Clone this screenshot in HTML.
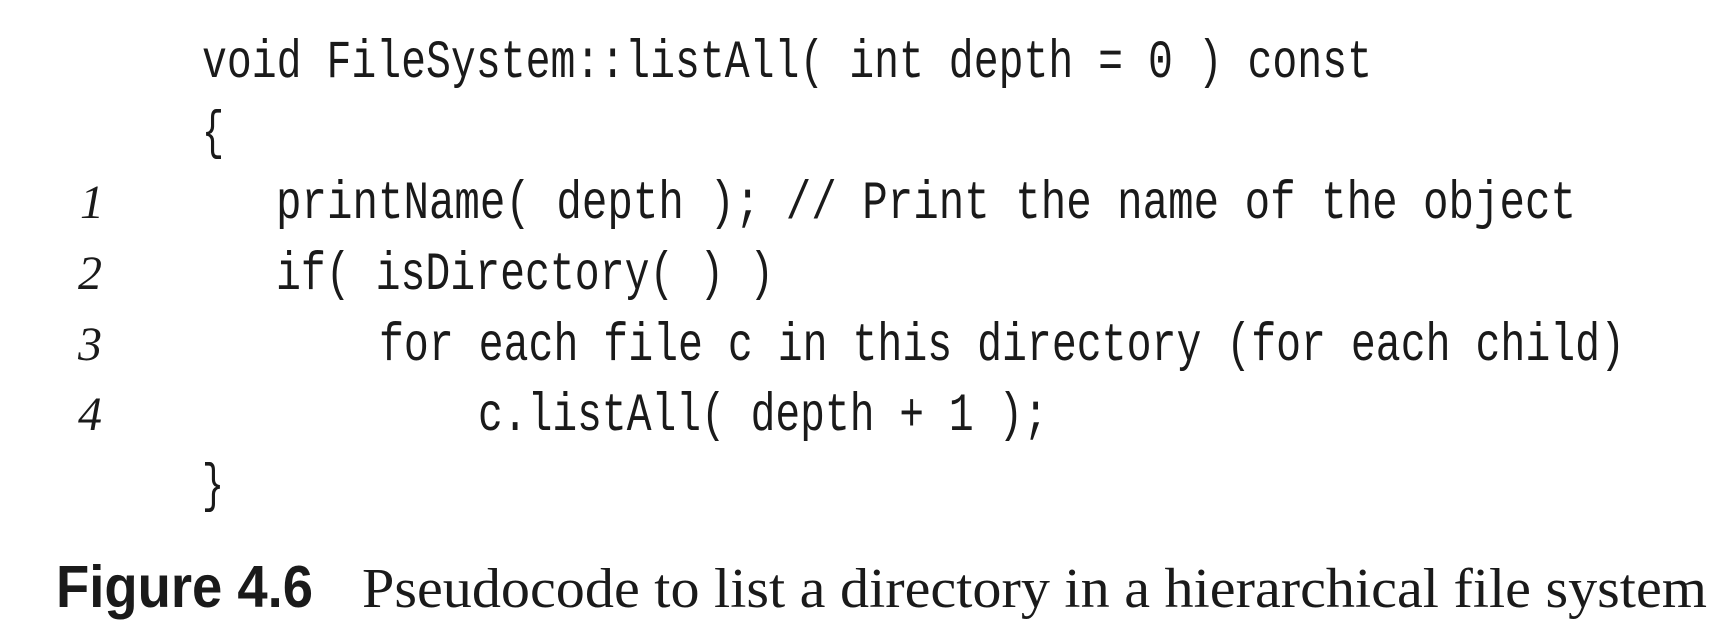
<!DOCTYPE html>
<html><head><meta charset="utf-8"><style>
html,body{margin:0;padding:0;background:#fff;width:1732px;height:640px;overflow:hidden}
svg{display:block}
.c{font-family:"Liberation Mono",monospace;font-size:54px;fill:#1a1a1a}
.n{font-family:"Liberation Serif",serif;font-style:italic;font-size:48px;fill:#1a1a1a}
</style></head><body>
<svg width="1732" height="640" viewBox="0 0 1732 640">
<text class="c" x="202" y="77" textLength="1170" lengthAdjust="spacingAndGlyphs">void FileSystem::listAll( int depth = 0 ) const</text>
<text class="c" x="202" y="148" textLength="22" lengthAdjust="spacingAndGlyphs">{</text>
<text class="n" x="80" y="218">1</text>
<text class="c" x="276" y="218" textLength="1300" lengthAdjust="spacingAndGlyphs">printName( depth );  // Print the name of the object</text>
<text class="n" x="78" y="289">2</text>
<text class="c" x="276" y="289" textLength="498" lengthAdjust="spacingAndGlyphs">if( isDirectory( ) )</text>
<text class="n" x="78" y="360">3</text>
<text class="c" x="379" y="360" textLength="1246" lengthAdjust="spacingAndGlyphs">for each file c in this directory (for each child)</text>
<text class="n" x="78" y="430">4</text>
<text class="c" x="478" y="430" textLength="570" lengthAdjust="spacingAndGlyphs">c.listAll( depth + 1 );</text>
<text class="c" x="202" y="501" textLength="22" lengthAdjust="spacingAndGlyphs">}</text>
<text x="56" y="607" font-family="Liberation Sans,sans-serif" font-weight="bold" font-size="59" fill="#1a1a1a" textLength="257" lengthAdjust="spacingAndGlyphs">Figure 4.6</text>
<text x="362" y="607" font-family="Liberation Serif,serif" font-size="56" fill="#1a1a1a" textLength="1345" lengthAdjust="spacingAndGlyphs">Pseudocode to list a directory in a hierarchical file system</text>
</svg>
</body></html>
